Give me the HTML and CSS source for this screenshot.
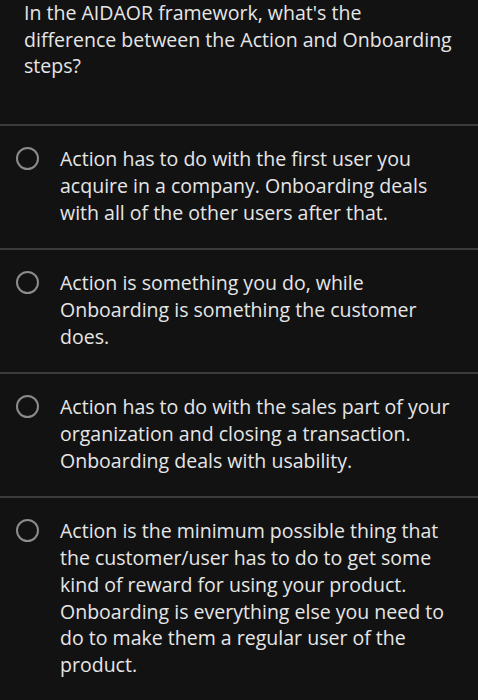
FILE: index.html
```html
<!DOCTYPE html>
<html>
<head>
<meta charset="utf-8">
<link rel="stylesheet" href="styles.css">
</head>
<body>
<div class="quiz">
  <div class="question">In the AIDAOR framework, what's the difference between the Action and Onboarding steps?</div>
  <ul class="options">
    <li class="option"><span class="radio"></span><span class="label">Action has to do with the first user you acquire in a company. Onboarding deals with all of the other users after that.</span></li>
    <li class="option"><span class="radio"></span><span class="label">Action is something you do, while Onboarding is something the customer does.</span></li>
    <li class="option"><span class="radio"></span><span class="label">Action has to do with the sales part of your organization and closing a transaction. Onboarding deals with usability.</span></li>
    <li class="option"><span class="radio"></span><span class="label">Action is the minimum possible thing that the customer/user has to do to get some kind of reward for using your product. Onboarding is everything else you need to do to make them a regular user of the product.</span></li>
  </ul>
</div>
</body>
</html>
```
FILE: styles.css
```css
html, body {
  margin: 0;
  padding: 0;
  background: #121212;
}
body {
  font-family: "Open Sans", "Noto Sans", sans-serif;
  color: #e6e6e6;
  font-size: 19.55px;
  line-height: 26.7px;
}
.quiz {
  display: flex;
  flex-direction: column;
}
.question {
  padding: 0 25px 44px 24px;
  border-bottom: 2px solid #3c3c3c;
}
.options {
  list-style: none;
  margin: 0;
  padding: 0;
}
.option {
  display: flex;
  align-items: flex-start;
  gap: 21px;
  padding: 20px 16px 22px 16px;
  border-bottom: 2px solid #3c3c3c;
}
.radio {
  flex: none;
  width: 19px;
  height: 19px;
  border: 2px solid #8c8c8c;
  border-radius: 50%;
  margin-top: 1px;
}
.label {
  flex: 1;
}
```
